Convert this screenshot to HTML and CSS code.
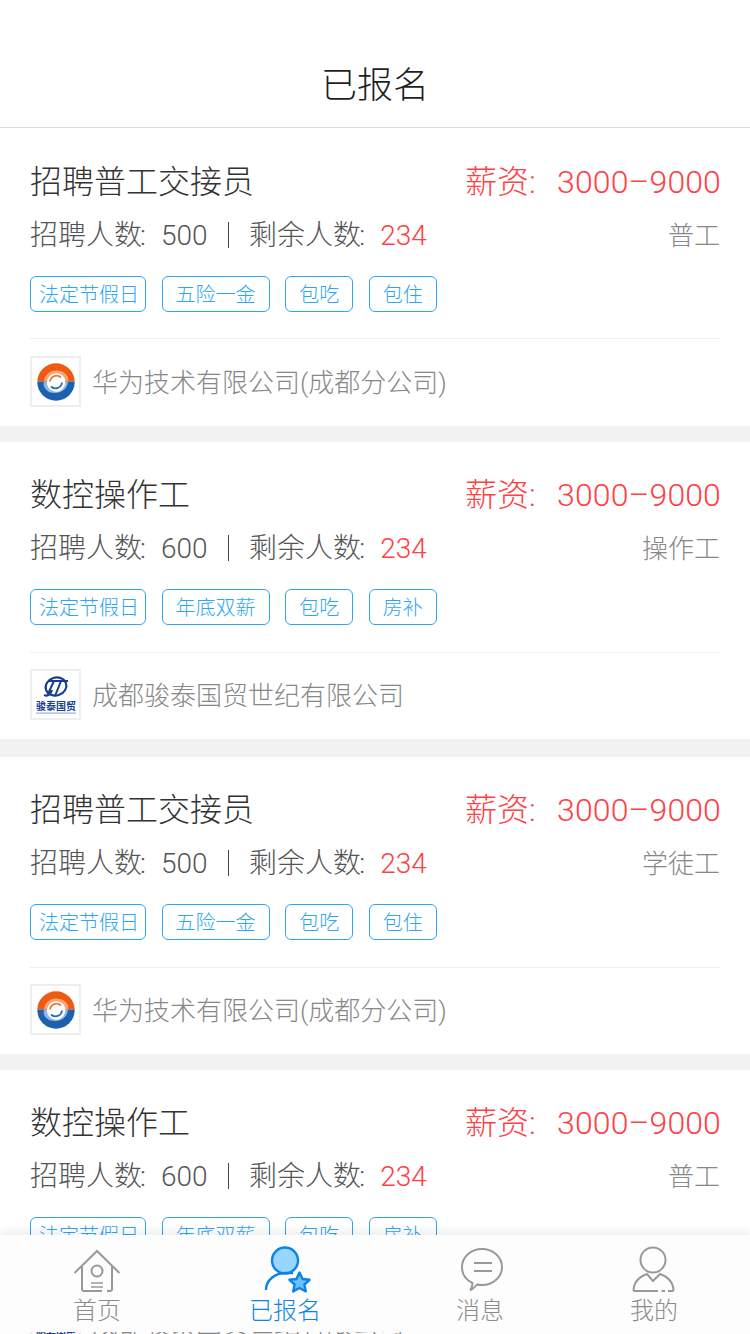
FILE: index.html
```html
<!DOCTYPE html>
<html>
<head>
  <meta charset="UTF-8">
  <meta name="viewport" content="width=device-width, initial-scale=1.0">
  <title>已报名</title>
  <link rel="stylesheet" href="styles.css">
</head>
<body>
  <svg class="defs" width="0" height="0">
    <defs>
      <clipPath id="ringTop"><rect x="0" y="0" width="47" height="23.5"/></clipPath>
      <clipPath id="ringBottom"><rect x="0" y="23.5" width="47" height="24"/></clipPath>
      <symbol id="logoRing" viewBox="0 0 47 47">
        <circle cx="24" cy="24" r="18.7" fill="#ee5a12" clip-path="url(#ringTop)"/>
        <circle cx="24" cy="24" r="18.7" fill="#1c60ae" clip-path="url(#ringBottom)"/>
        <path d="M12 23.5 C13 14 22 10 31 14 C36 17 37 21 36 23.5 Z" fill="#f6a673"/>
        <path d="M36 24 C35 33 26 37 17 34 C12 31 11 27 12 24 Z" fill="#8db8e4"/>
        <path d="M15 25 C15 17 24 12 31 18 C34 21 34 26 32 29 C30 33 25 35 21 33 C18 32 15 29 15 25 Z" fill="#fff"/>
        <g fill="none">
          <path d="M18 23.5 A6.5 6.5 0 0 1 29 19.5" stroke="#ec7a34" stroke-width="1.8"/>
          <path d="M30 24.5 A6.5 6.5 0 0 1 19 28.5" stroke="#2a6cb8" stroke-width="1.8"/>
        </g>
      </symbol>
      <symbol id="logoJt" viewBox="0 0 47 47">
        <ellipse cx="24" cy="15.5" rx="10.5" ry="9" fill="none" stroke="#173f8f" stroke-width="2.2" transform="rotate(-18 24 15.5)"/>
        <path d="M16 10 H36 M22 10 L15 25 M29 10 L23 25 M12 24 C16 26 19 23 20 19" fill="none" stroke="#173f8f" stroke-width="2"/>
        <text x="24" y="39" class="logo-name">骏泰国贸</text>
        <rect x="4" y="41.5" width="40" height="1.2" fill="#9db1d2"/>
      </symbol>
    </defs>
  </svg>

  <div class="screen">
    <header class="topbar">已报名</header>

    <div class="job job-first">
      <div class="row">
        <div class="job-title">招聘普工交接员</div>
        <div class="salary">薪资<span class="salary-colon">:</span><span class="num">3000–9000</span></div>
      </div>
      <div class="row meta">
        <div>招聘人数<span class="colon">:</span><span class="num">500</span><span class="sep"></span>剩余人数<span class="colon">:</span><span class="num red">234</span></div>
        <div class="kind">普工</div>
      </div>
      <div class="tags">
        <span class="tag tag-long">法定节假日</span>
        <span class="tag">五险一金</span>
        <span class="tag">包吃</span>
        <span class="tag">包住</span>
      </div>
      <div class="company">
        <span class="logo"><svg width="47" height="47"><use href="#logoRing"/></svg></span>
        <span class="company-name">华为技术有限公司(成都分公司)</span>
      </div>
    </div>

    <div class="job job-wide-gap">
      <div class="row">
        <div class="job-title">数控操作工</div>
        <div class="salary">薪资<span class="salary-colon">:</span><span class="num">3000–9000</span></div>
      </div>
      <div class="row meta">
        <div>招聘人数<span class="colon">:</span><span class="num">600</span><span class="sep"></span>剩余人数<span class="colon">:</span><span class="num red">234</span></div>
        <div class="kind">操作工</div>
      </div>
      <div class="tags">
        <span class="tag tag-long">法定节假日</span>
        <span class="tag">年底双薪</span>
        <span class="tag">包吃</span>
        <span class="tag">房补</span>
      </div>
      <div class="company">
        <span class="logo"><svg width="47" height="47"><use href="#logoJt"/></svg></span>
        <span class="company-name">成都骏泰国贸世纪有限公司</span>
      </div>
    </div>

    <div class="job">
      <div class="row">
        <div class="job-title">招聘普工交接员</div>
        <div class="salary">薪资<span class="salary-colon">:</span><span class="num">3000–9000</span></div>
      </div>
      <div class="row meta">
        <div>招聘人数<span class="colon">:</span><span class="num">500</span><span class="sep"></span>剩余人数<span class="colon">:</span><span class="num red">234</span></div>
        <div class="kind">学徒工</div>
      </div>
      <div class="tags">
        <span class="tag tag-long">法定节假日</span>
        <span class="tag">五险一金</span>
        <span class="tag">包吃</span>
        <span class="tag">包住</span>
      </div>
      <div class="company">
        <span class="logo"><svg width="47" height="47"><use href="#logoRing"/></svg></span>
        <span class="company-name">华为技术有限公司(成都分公司)</span>
      </div>
    </div>

    <div class="job">
      <div class="row">
        <div class="job-title">数控操作工</div>
        <div class="salary">薪资<span class="salary-colon">:</span><span class="num">3000–9000</span></div>
      </div>
      <div class="row meta">
        <div>招聘人数<span class="colon">:</span><span class="num">600</span><span class="sep"></span>剩余人数<span class="colon">:</span><span class="num red">234</span></div>
        <div class="kind">普工</div>
      </div>
      <div class="tags">
        <span class="tag tag-long">法定节假日</span>
        <span class="tag">年底双薪</span>
        <span class="tag">包吃</span>
        <span class="tag">房补</span>
      </div>
      <div class="company">
        <span class="logo"><svg width="47" height="47"><use href="#logoJt"/></svg></span>
        <span class="company-name">成都骏泰国贸世纪有限公司</span>
      </div>
    </div>

    <nav class="tabbar">
      <div class="tab">
        <svg class="tab-icon" width="48" height="48" viewBox="0 -2 48 48" fill="none" stroke="#999" stroke-width="2">
          <path d="M1.5 25 L24 3 L46.5 25"/>
          <path d="M9 17 V41 Q9 43 11 43 H29 M34 43 H37 Q39 43 39 41 V17"/>
          <circle cx="24" cy="23" r="5.5"/>
          <path d="M18 35 H30 M18 39 H30" stroke-width="1.5"/>
        </svg>
        <span class="tab-label">首页</span>
      </div>
      <div class="tab tab-active">
        <svg class="tab-icon" width="52" height="48" viewBox="-3 2 52 48" fill="none" stroke="#0a84e8" stroke-width="2.4">
          <circle cx="23" cy="16.5" r="13" fill="#99d6ff"/>
          <path d="M4 46 C4 36 13 29 24 29 H31"/>
          <path d="M37.5 28.5 L40.6 35 L47.6 35.8 L42.4 40.5 L43.8 47.4 L37.5 44 L31.2 47.4 L32.6 40.5 L27.4 35.8 L34.4 35 Z" fill="#6cc0fb" stroke-linejoin="round"/>
        </svg>
        <span class="tab-label">已报名</span>
      </div>
      <div class="tab">
        <svg class="tab-icon" width="48" height="48" viewBox="-2 0 48 48" fill="none" stroke="#999" stroke-width="2">
          <path d="M14.5 37 C8 34 4 28 4 21 C4 11 13 3 24 3 C35 3 44 11 44 21 C44 31 35 39 24 39 C22 39 20.5 39 19 38.5 C17 41 15 43 12.5 44 C13.5 42 14.5 40 14.5 37 Z" stroke-linejoin="round"/>
          <path d="M16 17 H34 M16 25 H34"/>
        </svg>
        <span class="tab-label">消息</span>
      </div>
      <div class="tab">
        <svg class="tab-icon" width="48" height="48" viewBox="0 0 48 48" fill="none" stroke="#999" stroke-width="2">
          <circle cx="23" cy="14" r="12.5"/>
          <path d="M3.5 45 C3.5 36 9 31 17 28 L23 35 L30 28 C38 31 43.5 36 43.5 45 M3.5 45 H28 M31.5 45 H35 M38 45 H43.5"/>
        </svg>
        <span class="tab-label">我的</span>
      </div>
    </nav>
  </div>
</body>
</html>
```

FILE: styles.css
```css
body {
  margin: 0;
  background-color: #fff;
  font-family: Roboto, "Noto Sans CJK SC", sans-serif;
  font-weight: 300;
  color: #333;
}
.defs {
  display: block;
  height: 0;
}
.screen {
  position: relative;
  width: 750px;
  height: 1334px;
  overflow: hidden;
  background-color: #f2f2f2;
}
.topbar {
  height: 127px;
  background-color: #fff;
  border-bottom: 1px solid #ddd;
  color: #1f1f1f;
  font-size: 36px;
  line-height: 172px;
  text-align: center;
}
.job {
  padding: 30px 30px 0;
  margin-bottom: 16px;
  background-color: #fff;
}
.job-first {
  padding-top: 31px;
}
.job-wide-gap {
  margin-bottom: 18px;
}
.row {
  display: flex;
  justify-content: space-between;
  align-items: center;
}
.job-title {
  font-size: 32px;
  line-height: 46px;
}
.salary {
  font-size: 32px;
  line-height: 46px;
  margin-right: -1px;
  color: #ff4045;
  white-space: nowrap;
}
.salary .num {
  letter-spacing: 0.12px;
}
.salary-colon {
  display: inline-block;
  width: 28px;
}
.meta {
  margin-top: 10px;
  font-size: 28px;
  line-height: 42px;
  color: #555;
}
.colon {
  display: inline-block;
  width: 21px;
  margin-left: -2px;
}
.sep {
  display: inline-block;
  width: 1.5px;
  height: 26px;
  margin: 0 20px;
  background-color: #444;
  vertical-align: -3px;
}
.red {
  color: #ff4045;
}
.kind {
  color: #888;
  font-size: 26px;
}
.tags {
  display: flex;
  gap: 15.6px;
  margin-top: 19px;
}
.tag {
  box-sizing: border-box;
  height: 36px;
  padding: 0 13px;
  border: 1px solid #2ea5f5;
  border-radius: 6px;
  color: #2ea5f5;
  font-size: 20px;
  line-height: 36px;
}
.tag-long {
  padding: 0 6px 0 8px;
}
.company {
  display: flex;
  align-items: center;
  gap: 11px;
  margin-top: 27px;
  padding: 16px 0 19px;
  border-top: 1px solid #eee;
  color: #888;
  font-size: 26px;
}
.job-first .company {
  margin-top: 26px;
  padding-top: 17px;
}
.company-name {
  padding-bottom: 3px;
}
.logo {
  box-sizing: border-box;
  width: 51px;
  height: 51px;
  border: 2px solid #eee;
  flex-shrink: 0;
}
.logo svg {
  display: block;
}
.logo-name {
  font-size: 10px;
  font-weight: 700;
  fill: #173f8f;
  text-anchor: middle;
}
.tabbar {
  position: absolute;
  left: 0;
  right: 0;
  bottom: 2px;
  height: 97px;
  display: grid;
  grid-template-columns: 194px 182px 208px 140px;
  background-color: #fdfdfd;
  box-shadow: 0 -4px 10px rgba(0, 0, 0, 0.07);
}
.tab {
  display: flex;
  flex-direction: column;
  align-items: center;
  padding-top: 11px;
  color: #8c8c8c;
}
.tab-active {
  color: #0a84e8;
}
.tab-icon {
  display: block;
}
.tab-label {
  margin-top: 3px;
  font-size: 24px;
  line-height: 28px;
}
```
